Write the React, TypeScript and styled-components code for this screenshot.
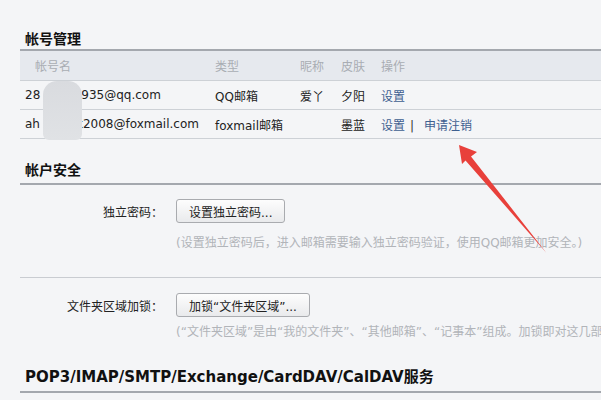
import React, { ReactElement } from 'react';
import styled, { createGlobalStyle } from 'styled-components';

const GlobalStyle = createGlobalStyle`
  html, body {
    margin: 0;
    padding: 0;
    background: #f4f5f7;
  }
  body {
    font-family: "DejaVu Sans", "Noto Sans CJK SC", sans-serif;
    font-size: 12px;
    color: #222;
  }
`;

const Page = styled.div`
  position: relative;
  width: 601px;
  height: 400px;
  overflow: hidden;
  padding-left: 20px;
  box-sizing: border-box;
  background: #f4f5f7;
`;

const SectionTitle = styled.div<{ $top: number; $pb: number; $size?: number }>`
  margin-top: ${(p) => p.$top}px;
  padding: 0 0 ${(p) => p.$pb}px 5px;
  line-height: 20px;
  font-size: ${(p) => p.$size ?? 14}px;
  font-weight: bold;
  color: #111;
  border-bottom: 2px solid #a4a8ae;
  white-space: nowrap;
`;

const Table = styled.div`
  position: relative;
`;

const Row = styled.div<{ $head?: boolean }>`
  display: grid;
  grid-template-columns: 190px 85px 41px 40px 1fr;
  align-items: center;
  height: ${(p) => (p.$head ? 30 : 29)}px;
  box-sizing: border-box;
  border-bottom: 1px solid #cdd1d6;
  background: ${(p) => (p.$head ? '#e6e9ee' : 'transparent')};
  color: ${(p) => (p.$head ? '#a9adb3' : '#222')};
  white-space: nowrap;
`;

const Cell = styled.div<{ $indent?: number }>`
  padding-left: ${(p) => p.$indent ?? 5}px;
`;

const Gap = styled.span<{ $w: number }>`
  display: inline-block;
  width: ${(p) => p.$w}px;
`;

const LinkText = styled.span`
  color: #3f6090;
`;

const Sep = styled.span`
  color: #333;
  margin: 0 10px 0 5px;
`;

const Mask = styled.div`
  position: absolute;
  left: 23px;
  top: 30px;
  width: 39px;
  height: 59px;
  border-radius: 14px 14px 6px 6px;
  background: linear-gradient(#d9dbdf, #e0e2e5);
`;

const FormRow = styled.div<{ $top: number }>`
  display: flex;
  align-items: center;
  gap: 13px;
  margin-top: ${(p) => p.$top}px;
  height: 24px;
`;

const Label = styled.div`
  width: 143px;
  text-align: right;
  color: #222;
  white-space: nowrap;
`;

const Button = styled.button`
  height: 24px;
  padding: 0 12px;
  font-family: "DejaVu Sans", "Noto Sans CJK SC", sans-serif;
  font-size: 12px;
  color: #222;
  background: linear-gradient(#fdfdfd, #e9eaec);
  border: 1px solid #a9abaf;
  border-radius: 3px;
  white-space: nowrap;
`;

const Hint = styled.div<{ $top: number }>`
  margin-top: ${(p) => p.$top}px;
  padding-left: 156px;
  line-height: 20px;
  color: #b1b4b9;
  white-space: nowrap;
`;

const Divider = styled.div`
  margin-top: 24px;
  border-top: 1px solid #c9ccd1;
`;

const Arrow = styled.svg`
  position: absolute;
  left: 0;
  top: 0;
  pointer-events: none;
`;

const accounts = [
  { head: '28', gap: 41, tail: '935@qq.com', type: 'QQ邮箱', nick: '爱丫', skin: '夕阳', cancel: false },
  { head: 'ah', gap: 36, tail: 'k2008@foxmail.com', type: 'foxmail邮箱', nick: '', skin: '墨蓝', cancel: true },
];

const App = (): ReactElement => (
  <>
    <GlobalStyle />
    <Page>
      <SectionTitle $top={29} $pb={0}>帐号管理</SectionTitle>
      <Table>
        <Row $head>
          <Cell $indent={15}>帐号名</Cell>
          <Cell>类型</Cell>
          <Cell>昵称</Cell>
          <Cell>皮肤</Cell>
          <Cell>操作</Cell>
        </Row>
        {accounts.map((a) => (
          <Row key={a.tail}>
            <Cell>
              {a.head}
              <Gap $w={a.gap} />
              {a.tail}
            </Cell>
            <Cell>{a.type}</Cell>
            <Cell>{a.nick}</Cell>
            <Cell>{a.skin}</Cell>
            <Cell>
              <LinkText>设置</LinkText>
              {a.cancel && (
                <>
                  <Sep>|</Sep>
                  <LinkText>申请注销</LinkText>
                </>
              )}
            </Cell>
          </Row>
        ))}
        <Mask />
      </Table>

      <SectionTitle $top={21} $pb={3}>帐户安全</SectionTitle>
      <FormRow $top={14}>
        <Label>独立密码：</Label>
        <Button type="button">设置独立密码...</Button>
      </FormRow>
      <Hint $top={10}>(设置独立密码后，进入邮箱需要输入独立密码验证，使用QQ邮箱更加安全。)</Hint>
      <Divider />
      <FormRow $top={15}>
        <Label>文件夹区域加锁：</Label>
        <Button type="button">加锁“文件夹区域”...</Button>
      </FormRow>
      <Hint $top={5}>(“文件夹区域”是由“我的文件夹”、“其他邮箱”、“记事本”组成。加锁即对这几部分区域加锁。)</Hint>

      <SectionTitle $top={25} $pb={4} $size={15}>POP3/IMAP/SMTP/Exchange/CardDAV/CalDAV服务</SectionTitle>

      <Arrow width="601" height="400" viewBox="0 0 601 400">
        <polygon
          points="459,145 477,152 471,156.5 546.5,253 465.5,160.5 462,164"
          fill="#e8403b"
        />
      </Arrow>
    </Page>
  </>
);

export default App;
